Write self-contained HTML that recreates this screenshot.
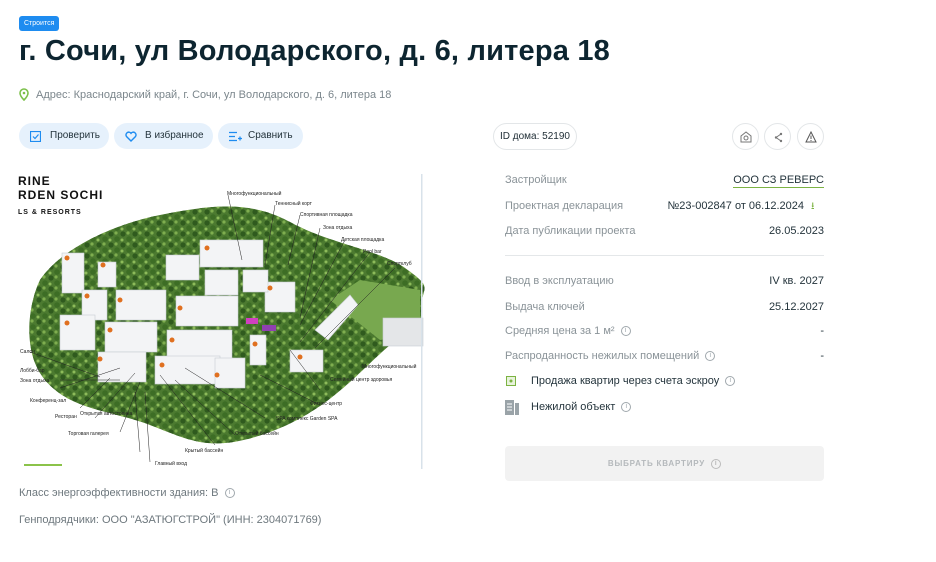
<!DOCTYPE html>
<html><head><meta charset="utf-8"><style>
*{margin:0;padding:0;box-sizing:border-box}
body{width:936px;height:562px;background:#fff;font-family:"Liberation Sans",sans-serif;position:relative;overflow:hidden;color:#1f2d35}
.a{position:absolute;white-space:nowrap}
.badge{left:19px;top:16px;height:15px;padding:0 5px;background:#1e8cf0;color:#fff;font-size:7px;line-height:15px;border-radius:3px}
h1{position:absolute;left:19px;top:35px;font-size:29px;font-weight:bold;color:#0d2530;white-space:nowrap;letter-spacing:0.2px}
.addr{left:36px;top:89px;font-size:11px;color:#7b868c}
.btn{position:absolute;top:123px;height:26px;background:#e6f1fc;border-radius:13px;font-size:10px;line-height:26px;color:#24343c}
.pill{position:absolute;border:1px solid #e3e6e8;border-radius:14px}
.lbl{font-size:11px;color:#8a9398;left:505px}
.val{font-size:11px;color:#24343c;right:112px}
.info{display:inline-block;width:10px;height:10px;border:1px solid #a0a8ad;border-radius:50%;font-size:7px;line-height:8px;text-align:center;color:#a0a8ad;vertical-align:middle;margin-left:6px}
</style></head><body>
<div class="a badge">Строится</div>
<h1>г. Сочи, ул Володарского, д. 6, литера 18</h1>
<svg class="a" style="left:19px;top:88px" width="10" height="13" viewBox="0 0 10 13"><path d="M5 1a4 4 0 0 0-4 4c0 3 4 7 4 7s4-4 4-7a4 4 0 0 0-4-4z" fill="none" stroke="#7cc04b" stroke-width="1.6"/><circle cx="5" cy="5" r="1.3" fill="#7cc04b"/></svg>
<div class="a addr">Адрес: Краснодарский край, г. Сочи, ул Володарского, д. 6, литера 18</div>

<div class="btn" style="left:19px;width:90px"><svg style="position:absolute;left:11px;top:8px" width="11" height="11"><rect x="0.5" y="0.5" width="10" height="10" fill="none" stroke="#1e8cf0" stroke-width="1.2"/><path d="M3 5.5l2 2 3.5-4" fill="none" stroke="#1e8cf0" stroke-width="1.2"/></svg><span style="position:absolute;left:31px">Проверить</span></div>
<div class="btn" style="left:114px;width:99px"><svg style="position:absolute;left:11px;top:8px" width="12" height="11"><path d="M6 10L1.5 5.5A2.5 2.5 0 0 1 6 2.3 2.5 2.5 0 0 1 10.5 5.5z" fill="none" stroke="#1e8cf0" stroke-width="1.4"/></svg><span style="position:absolute;left:31px">В избранное</span></div>
<div class="btn" style="left:218px;width:85px"><svg style="position:absolute;left:11px;top:8px" width="13" height="11"><path d="M0 1.5h8M0 5.5h6M0 9.5h8M9 7.5h4M11 5.5v4" stroke="#1e8cf0" stroke-width="1.3"/></svg><span style="position:absolute;left:30px">Сравнить</span></div>

<div class="pill" style="left:493px;top:123px;width:84px;height:27px;font-size:10px;line-height:25px;text-align:center">ID дома: 52190</div>
<div class="pill" style="left:732px;top:123px;width:27px;height:27px"><svg style="position:absolute;left:7px;top:7px" width="12" height="12"><path d="M1 5l5-4 5 4v6H1z" fill="none" stroke="#777" stroke-width="1"/><circle cx="6" cy="7" r="2" fill="none" stroke="#777"/></svg></div>
<div class="pill" style="left:764px;top:123px;width:27px;height:27px"><svg style="position:absolute;left:8px;top:8px" width="11" height="11"><path d="M8 2L3 5.5 8 9" fill="none" stroke="#777"/><circle cx="8" cy="2" r="1.2" fill="#777"/><circle cx="3" cy="5.5" r="1.2" fill="#777"/><circle cx="8" cy="9" r="1.2" fill="#777"/></svg></div>
<div class="pill" style="left:797px;top:123px;width:27px;height:27px"><svg style="position:absolute;left:7px;top:7px" width="12" height="12"><path d="M6 1L11 11H1z" fill="none" stroke="#555"/><path d="M6 4.5v3.5M6 9v1" stroke="#555"/></svg></div>

<div class="a lbl" style="top:174px">Застройщик</div>
<div class="a val" style="top:174px;border-bottom:1px solid #7cb342;padding-bottom:1px">ООО СЗ РЕВЕРС</div>
<div class="a lbl" style="top:200px">Проектная декларация</div>
<div class="a val" style="top:200px;right:132px">№23-002847 от 06.12.2024</div>
<div class="a" style="left:811px;top:199px;color:#7cb342;font-size:10px">⭳</div>
<div class="a lbl" style="top:225px">Дата публикации проекта</div>
<div class="a val" style="top:225px">26.05.2023</div>
<div class="a" style="left:505px;top:255px;width:319px;height:1px;background:#e4e7e9"></div>
<div class="a lbl" style="top:275px">Ввод в эксплуатацию</div>
<div class="a val" style="top:275px">IV кв. 2027</div>
<div class="a lbl" style="top:301px">Выдача ключей</div>
<div class="a val" style="top:301px">25.12.2027</div>
<div class="a lbl" style="top:325px">Средняя цена за 1 м²<span class="info">i</span></div>
<div class="a val" style="top:325px">-</div>
<div class="a lbl" style="top:350px">Распроданность нежилых помещений<span class="info">i</span></div>
<div class="a val" style="top:350px">-</div>
<svg class="a" style="left:506px;top:376px" width="10" height="10"><rect x="0.5" y="0.5" width="9" height="9" fill="#e8f3dc" stroke="#7cb342"/><circle cx="5" cy="5" r="1.5" fill="#7cb342"/></svg>
<div class="a" style="left:531px;top:375px;font-size:11px;color:#24343c">Продажа квартир через счета эскроу<span class="info">i</span></div>
<svg class="a" style="left:505px;top:400px" width="14" height="15"><path d="M0 0h9v15H0z" fill="#9aa3a8"/><path d="M10 3h4v12h-4z" fill="#9aa3a8"/><path d="M2 4h5M2 7h5M2 10h5" stroke="#fff"/></svg>
<div class="a" style="left:531px;top:401px;font-size:11px;color:#24343c">Нежилой объект<span class="info">i</span></div>
<div class="a" style="left:505px;top:446px;width:319px;height:35px;background:#f2f2f2;border-radius:4px;font-size:8px;font-weight:bold;letter-spacing:0.8px;color:#b5b9bc;text-align:center;line-height:35px">ВЫБРАТЬ КВАРТИРУ<span class="info" style="border-color:#bbb;color:#bbb">i</span></div>

<svg class="a" style="left:0;top:170px" width="430" height="300" viewBox="0 170 430 300">
<defs>
<pattern id="tr" width="12" height="11" patternUnits="userSpaceOnUse">
<circle cx="3" cy="3" r="2.6" fill="#2f5a1e"/><circle cx="9" cy="8" r="2.8" fill="#3d6d25"/><circle cx="8" cy="2" r="1.6" fill="#7fae4f"/><circle cx="2" cy="9" r="1.5" fill="#8dbb5a"/>
</pattern>
</defs>
<path d="M40 280C60 250 110 225 160 215S250 200 290 222 380 250 405 268 425 285 422 300V330L390 345C360 370 330 410 270 432S190 440 150 425 70 410 45 380 30 300 40 280z" fill="#4c7a30"/>
<path d="M40 280C60 250 110 225 160 215S250 200 290 222 380 250 405 268 425 285 422 300V330L390 345C360 370 330 410 270 432S190 440 150 425 70 410 45 380 30 300 40 280z" fill="url(#tr)"/>
<path d="M330 300l30-20 60 10v45l-40 5z" fill="#78a84f"/>
<g fill="#f3f4f6" stroke="#c7cdd2" stroke-width="0.6">
<rect x="62" y="253" width="22" height="40"/><rect x="98" y="262" width="18" height="25"/><rect x="166" y="255" width="33" height="25"/>
<rect x="200" y="240" width="63" height="27"/><rect x="205" y="270" width="33" height="25"/><rect x="116" y="290" width="50" height="30"/>
<rect x="176" y="296" width="62" height="30"/><rect x="82" y="290" width="25" height="30"/><rect x="60" y="315" width="35" height="35"/>
<rect x="105" y="322" width="52" height="30"/><rect x="167" y="330" width="65" height="30"/><rect x="98" y="352" width="48" height="30"/>
<rect x="155" y="356" width="65" height="28"/><rect x="215" y="358" width="30" height="30"/><rect x="250" y="335" width="16" height="30"/>
<rect x="265" y="282" width="30" height="30"/><rect x="243" y="270" width="25" height="22"/><rect x="290" y="350" width="33" height="22"/>
<rect x="383" y="318" width="40" height="28" fill="#e4e6e8"/><path d="M315 330l35-35 8 10-30 35z"/>
</g>
<rect x="246" y="318" width="12" height="6" fill="#d040c0"/><rect x="262" y="325" width="14" height="6" fill="#9040b0"/>
<g fill="#e07020"><circle cx="67" cy="258" r="2.5"/><circle cx="103" cy="265" r="2.5"/><circle cx="207" cy="248" r="2.5"/><circle cx="120" cy="300" r="2.5"/><circle cx="180" cy="308" r="2.5"/><circle cx="87" cy="296" r="2.5"/><circle cx="67" cy="323" r="2.5"/><circle cx="110" cy="330" r="2.5"/><circle cx="172" cy="340" r="2.5"/><circle cx="100" cy="359" r="2.5"/><circle cx="162" cy="365" r="2.5"/><circle cx="217" cy="375" r="2.5"/><circle cx="270" cy="288" r="2.5"/><circle cx="300" cy="357" r="2.5"/><circle cx="255" cy="344" r="2.5"/></g>
<g stroke="#222" stroke-width="0.5" fill="none"><path d="M228 195l14 65M275 205l-10 60M300 215l-12 50M320 228l-20 90M345 240l-45 85M370 252l-70 90M395 268l-80 80M320 390l-30-40M320 405l-60-30M265 418l-80-50M235 435l-60-55M215 445l-55-70M150 462l-5-70M140 452l-5-60M120 432l20-50M95 418l40-45M80 408l30-30M60 388l60-20M60 380l60 0M30 352l70 25"/></g>
<g font-size="5" fill="#222" font-family="Liberation Sans"><text x="227" y="195">Многофункциональный</text><text x="275" y="205">Теннисный корт</text><text x="300" y="216">Спортивная площадка</text><text x="323" y="229">Зона отдыха</text><text x="341" y="241">Детская площадка</text><text x="363" y="253">Pool bar</text><text x="387" y="265">Спортклуб</text><text x="362" y="368">Многофункциональный</text><text x="330" y="381">Семейный центр здоровья</text><text x="310" y="405">Фитнес-центр</text><text x="276" y="420">SPA комплекс Garden SPA</text><text x="235" y="435">Открытый бассейн</text><text x="185" y="452">Крытый бассейн</text><text x="155" y="465">Главный вход</text><text x="80" y="415">Открытая автостоянка</text><text x="68" y="435">Торговая галерея</text><text x="55" y="418">Ресторан</text><text x="30" y="402">Конференц-зал</text><text x="20" y="353">Салон</text><text x="20" y="372">Лобби-бар</text><text x="20" y="382">Зона отдыха</text></g>
<text x="18" y="185" font-size="12" font-weight="bold" fill="#111" letter-spacing="1">RINE</text>
<text x="18" y="199" font-size="12" font-weight="bold" fill="#111" letter-spacing="1">RDEN SOCHI</text>
<text x="18" y="214" font-size="7" font-weight="bold" fill="#111" letter-spacing="1">LS &amp; RESORTS</text>
<rect x="24" y="464" width="38" height="2" fill="#8bc34a"/>
<rect x="421" y="174" width="1.5" height="295" fill="#d8e2ea"/>
</svg>

<div class="a" style="left:19px;top:487px;font-size:11px;color:#6e787e">Класс энергоэффективности здания: B<span class="info">i</span></div>
<div class="a" style="left:19px;top:514px;font-size:11px;color:#6e787e">Генподрядчики: ООО "АЗАТЮГСТРОЙ" (ИНН: 2304071769)</div>
</body></html>
